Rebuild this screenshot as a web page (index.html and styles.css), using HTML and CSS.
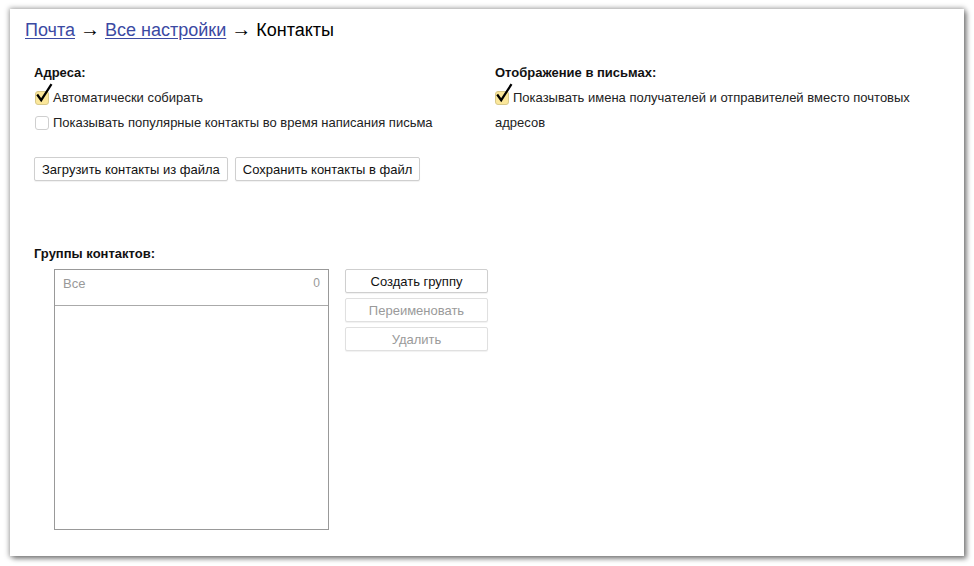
FILE: index.html
```html
<!DOCTYPE html>
<html lang="ru">
<head>
<meta charset="utf-8">
<title>Контакты</title>
<link rel="stylesheet" href="styles.css">
</head>
<body>
<div class="panel">
  <div class="crumbs"><a href="#">Почта</a> <span class="arr">→</span> <a href="#">Все настройки</a> <span class="arr">→</span> Контакты</div>
  <div class="cols">
    <div class="col">
      <div class="head">Адреса:</div>
      <div class="row"><span class="cb on"><svg viewBox="0 0 18 20" class="tick"><path d="M2.2 11.5 L6.2 17.2 L16.5 1.2" fill="none" stroke="#000" stroke-width="2.2" stroke-linejoin="miter"/></svg></span>Автоматически собирать</div>
      <div class="row"><span class="cb"></span>Показывать популярные контакты во время написания письма</div>
      <div class="btns">
        <button class="btn">Загрузить контакты из файла</button>
        <button class="btn">Сохранить контакты в файл</button>
      </div>
    </div>
    <div class="col">
      <div class="head">Отображение в письмах:</div>
      <div class="row wrap"><span class="cb on first"><svg viewBox="0 0 18 20" class="tick"><path d="M2.2 11.5 L6.2 17.2 L16.5 1.2" fill="none" stroke="#000" stroke-width="2.2"/></svg></span>Показывать имена получателей и отправителей вместо почтовых адресов</div>
    </div>
  </div>
  <div class="head groups-head">Группы контактов:</div>
  <div class="groups">
    <div class="list">
      <div class="list-item"><span>Все</span><span class="count">0</span></div>
    </div>
    <div class="side">
      <button class="btn">Создать группу</button>
      <button class="btn dis">Переименовать</button>
      <button class="btn dis">Удалить</button>
    </div>
  </div>
</div>
</body>
</html>
```
FILE: styles.css
```css
html, body {
  margin: 0;
  background: #fff;
}
body {
  padding: 9px 10px;
  font-family: "Liberation Sans", Arial, sans-serif;
  font-size: 13px;
  color: #000;
}
.panel {
  width: 954px;
  height: 547px;
  box-sizing: border-box;
  background: #fff;
  box-shadow: 0 0 5px 1px rgba(0,0,0,0.35), 3px 3px 5px rgba(0,0,0,0.35);
  padding: 9px 24px 0 24px;
}
.crumbs {
  font-size: 18px;
  line-height: 24px;
  margin-left: -9px;
  color: #000;
}
.crumbs a {
  color: #3b4aa3;
  text-decoration: underline;
  text-underline-offset: 2px;
}
.arr {
  font-family: "Liberation Sans", Arial, sans-serif;
  font-size: 20px;
  line-height: 0;
}
.cols {
  display: grid;
  grid-template-columns: 461px 1fr;
  margin-top: 18px;
}
.head {
  font-weight: bold;
  line-height: 25px;
  color: #111;
}
.row {
  line-height: 25px;
  color: #222;
}
.row.wrap {
  max-width: 415px;
}
.cb {
  display: inline-block;
  position: relative;
  width: 12px;
  height: 12px;
  border: 1px solid #cfcfcf;
  border-radius: 3px;
  background: #fff;
  vertical-align: -3px;
  margin: 0 4px 0 1px;
}
.cb.first {
  margin-left: 0;
}
.cb.on {
  background: #fbe79a;
  border-color: #d8c98a;
}
.tick {
  position: absolute;
  left: -1px;
  top: -9px;
  width: 18px;
  height: 20px;
}
.btns {
  display: flex;
  gap: 7px;
  margin-top: 22px;
}
.btn {
  font-family: "Liberation Sans", Arial, sans-serif;
  font-size: 13px;
  height: 24px;
  padding: 0 7px;
  background: #fff;
  border: 1px solid #cfcfcf;
  border-radius: 2px;
  color: #111;
  box-shadow: 0 1px 1px rgba(0,0,0,0.06);
}
.btn.dis {
  color: #9a9a9a;
  border-color: #e0e0e0;
}
.groups-head {
  margin-top: 60px;
}
.groups {
  display: flex;
  gap: 16px;
  margin-top: 3px;
  margin-left: 20px;
}
.list {
  width: 275px;
  height: 261px;
  box-sizing: border-box;
  border: 1px solid #999;
}
.list-item {
  display: flex;
  justify-content: space-between;
  height: 36px;
  box-sizing: border-box;
  border-bottom: 1px solid #aaa;
  padding: 6px 8px 0 8px;
  color: #999;
  font-size: 13px;
}
.count {
  font-size: 12px;
}
.side {
  display: flex;
  flex-direction: column;
  gap: 5px;
  width: 143px;
}
.side .btn {
  width: 143px;
}
```
